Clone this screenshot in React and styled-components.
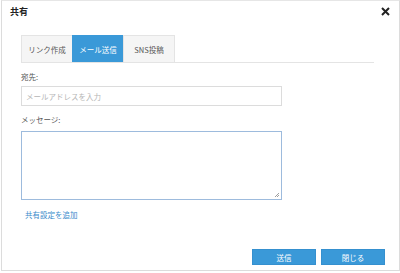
import React from "react";
import styled, { createGlobalStyle } from "styled-components";

const Global = createGlobalStyle`
  html, body { margin: 0; padding: 0; background: #fff; }
  body { font-family: "Noto Sans CJK JP", "Liberation Sans", sans-serif; }
  * { box-sizing: border-box; }
`;

const Dialog = styled.div`
  width: 399px;
  height: 271px;
  margin: 0 0 0 1px;
  border: 1px solid #dcdcdc;
  border-top-color: #e6e6e6;
  display: flex;
  flex-direction: column;
  background: #fff;
`;

const Header = styled.div`
  display: flex;
  align-items: center;
  justify-content: space-between;
  height: 20px;
  padding: 1px 8px 0 8px;
`;

const Title = styled.div`
  font-size: 9px;
  font-weight: 700;
  color: #222;
`;

const Close = styled.button`
  border: 0;
  background: none;
  padding: 0;
  width: 12px;
  height: 12px;
  display: flex;
  align-items: center;
  justify-content: center;
  cursor: pointer;
`;

const Body = styled.div`
  flex: 1;
  display: flex;
  flex-direction: column;
  padding: 14px 0 0 19px;
`;

const TabBar = styled.div`
  display: flex;
  width: 353px;
  border-bottom: 1px solid #e4e4e4;
`;

const Tab = styled.div`
  width: 52px;
  height: 27px;
  display: flex;
  align-items: center;
  justify-content: center;
  font-size: 7.5px;
  background: ${(p) => (p.$active ? "#3a99d8" : "#f5f5f5")};
  color: ${(p) => (p.$active ? "#fff" : "#555")};
  border: 1px solid ${(p) => (p.$active ? "#3a99d8" : "#e4e4e4")};
  border-bottom: 0;
  margin-right: -1px;
`;

const Label = styled.div`
  font-size: 7.5px;
  color: #555;
  margin-top: ${(p) => p.$mt || 0}px;
  line-height: 10px;
`;

const Input = styled.div`
  width: 261px;
  height: 20px;
  margin-top: 4px;
  border: 1px solid #dcdcdc;
  font-size: 7.5px;
  color: #b5b5b5;
  display: flex;
  align-items: center;
  padding-left: 4px;
`;

const TextArea = styled.div`
  position: relative;
  width: 261px;
  height: 69px;
  margin-top: 6px;
  border: 1px solid #9dbbdd;
`;

const Grip = styled.svg`
  position: absolute;
  right: 1px;
  bottom: 1px;
`;

const Link = styled.a`
  font-size: 7.5px;
  color: #3a8ccb;
  margin: 10px 0 0 4px;
  line-height: 10px;
`;

const Footer = styled.div`
  display: flex;
  justify-content: flex-end;
  gap: 5px;
  padding: 0 14px 5px 0;
  margin-top: auto;
`;

const Button = styled.button`
  width: 64px;
  height: 16px;
  border: 1px solid #3590cf;
  background: #3a99d8;
  color: #fff;
  font-size: 7.5px;
  font-family: inherit;
  padding: 0;
`;

export default function App() {
  return (
    <>
      <Global />
      <Dialog>
        <Header>
          <Title>共有</Title>
          <Close aria-label="close">
            <svg width="9" height="9" viewBox="0 0 9 9">
              <path d="M1 1L8 8M8 1L1 8" stroke="#222" strokeWidth="2" />
            </svg>
          </Close>
        </Header>
        <Body>
          <TabBar>
            <Tab>リンク作成</Tab>
            <Tab $active>メール送信</Tab>
            <Tab>SNS投稿</Tab>
          </TabBar>
          <Label $mt={9}>宛先:</Label>
          <Input>メールアドレスを入力</Input>
          <Label $mt={9}>メッセージ:</Label>
          <TextArea>
            <Grip width="6" height="6" viewBox="0 0 6 6">
              <path d="M5 1L1 5M5 3L3 5" stroke="#888" strokeWidth="0.8" />
            </Grip>
          </TextArea>
          <Link>共有設定を追加</Link>
        </Body>
        <Footer>
          <Button>送信</Button>
          <Button>閉じる</Button>
        </Footer>
      </Dialog>
    </>
  );
}
